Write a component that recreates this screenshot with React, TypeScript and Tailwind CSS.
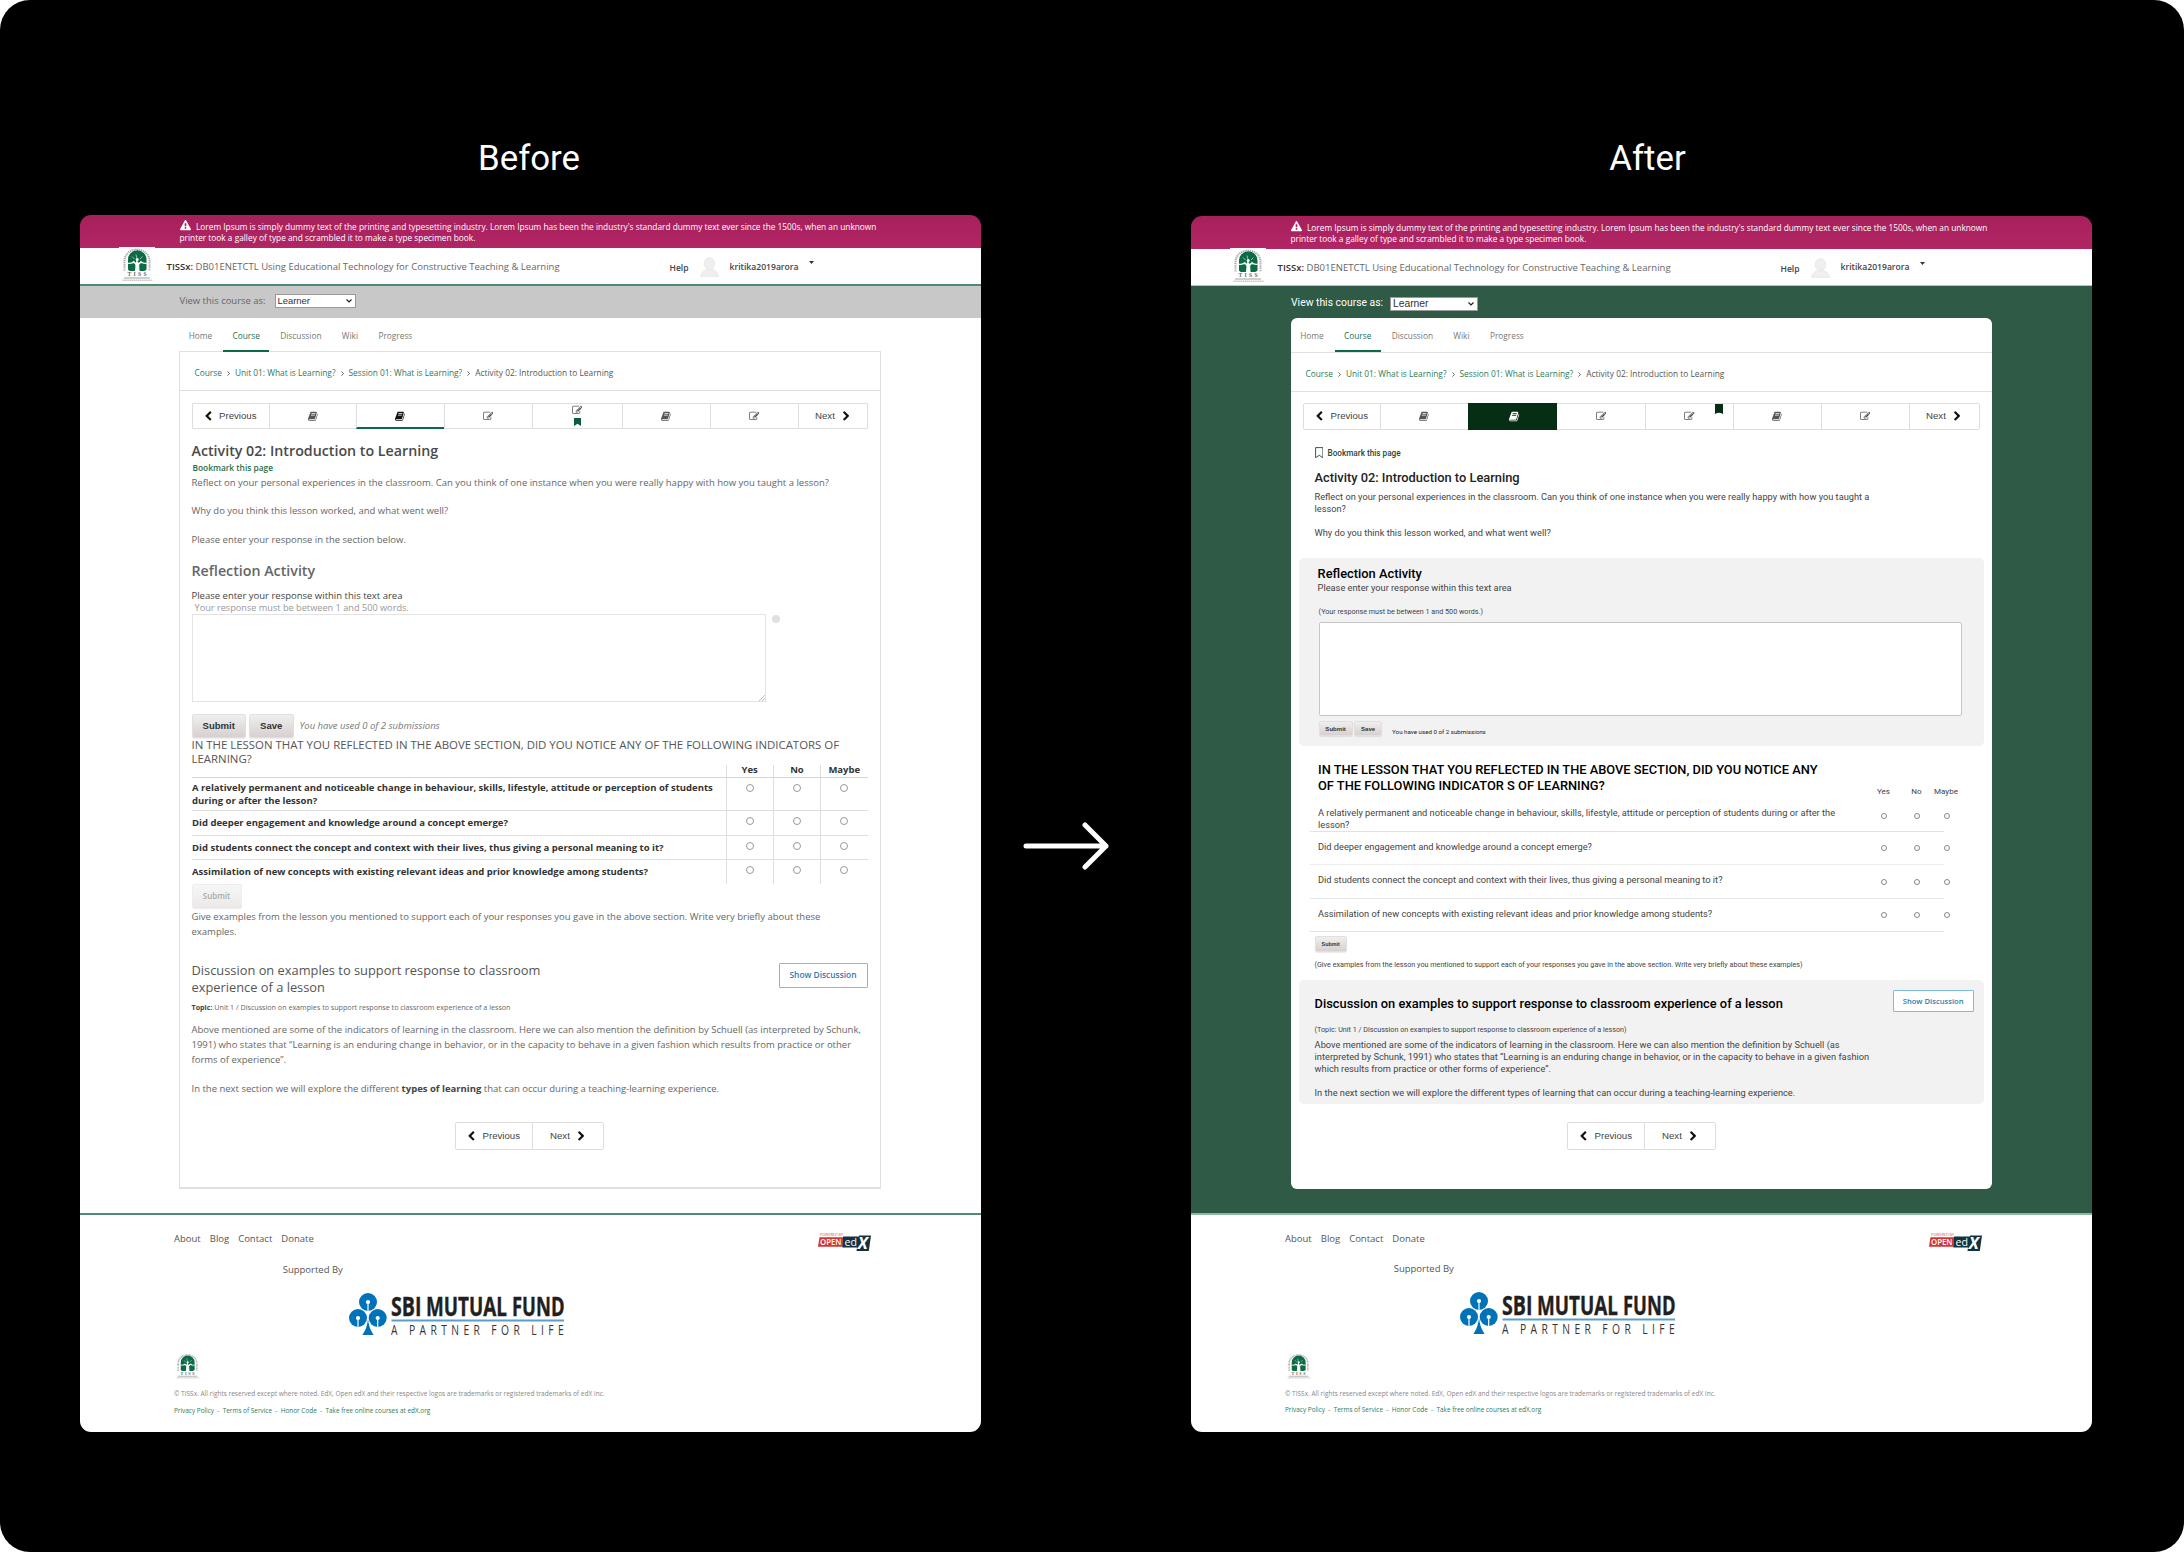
import type { ReactNode } from "react";

const BOOK =
  "M1639 478q40 57 18 129l-275 906q-19 64-76.500 107.500t-122.500 43.500h-923q-77 0-148.500-53.500t-99.500-131.500q-24-67-2-127 0-4 3-27t4-37q1-8-3-21.500t-3-19.500q2-11 8-21t16.500-23.500 16.500-23.500q23-38 45-91.500t30-91.500q3-10 .5-30t-.5-28q3-11 17-28t17-23q21-36 42-92t25-90q1-9-2.500-32t.5-28q4-13 22-30.500t22-22.500q19-26 42.500-84.500t27.500-96.500q1-8-3-25.500t-2-26.500q2-8 9-18t18-23 17-21q8-12 16.500-30.500t15-35 16-36 19.500-32 26.500-23.500 36-11.500 47.500 5.500l-1 3q38-9 51-9h761q74 0 114 56t18 130l-274 906q-36 119-71.500 153.500t-128.500 34.500h-869q-27 0-38 15-11 16-1 43 24 70 144 70h923q29 0 56-15.500t35-41.500l300-987q7-22 5-57 38 15 59 43zm-1064 2q-4 13 2 22.500t20 9.500h608q13 0 25.500-9.500t16.500-22.500l21-64q4-13-2-22.500t-20-9.500h-608q-13 0-25.500 9.500t-16.500 22.500zm-83 256q-4 13 2 22.500t20 9.500h608q13 0 25.500-9.500t16.500-22.500l21-64q4-13-2-22.500t-20-9.500h-608q-13 0-25.500 9.500t-16.500 22.500z";
const EDIT =
  "M888 1184l116-116-152-152-116 116v56h96v96h56zm440-720q-16-16-33 1l-350 350q-17 17-1 33t33-1l350-350q17-17 1-33zm80 594v190q0 119-84.500 203.500t-203.500 84.500h-832q-119 0-203.500-84.500t-84.500-203.500v-832q0-119 84.500-203.500t203.500-84.500h832q63 0 117 25 15 7 18 23 3 17-9 29l-49 49q-14 14-32 8-23-6-45-6h-832q-66 0-113 47t-47 113v832q0 66 47 113t113 47h832q66 0 113-47t47-113v-126q0-13 9-22l64-64q15-15 35-7t20 29zm-96-738l288 288-672 672h-288v-288zm444 132l-92 92-288-288 92-92q28-28 68-28t68 28l152 152q28 28 28 68t-28 68z";
const CHEVRON =
  "M1427 301l-531 531 531 531q19 19 19 45t-19 45l-166 166q-19 19-45 19t-45-19l-742-742q-19-19-19-45t19-45l742-742q19-19 45-19t45 19l166 166q19 19 19 45t-19 45z";
const WARNING =
  "M1024 1375v-190q0-14-9.500-23.500t-22.500-9.500h-192q-13 0-22.500 9.500t-9.500 23.500v190q0 14 9.500 23.500t22.500 9.500h192q13 0 22.500-9.500t9.500-23.500zm-2-374l18-459q0-12-10-19-13-11-24-11h-220q-11 0-24 11-10 7-10 21l17 457q0 10 10 16.500t24 6.500h185q14 0 23.500-6.500t10.500-16.500zm-14-934l768 1408q35 63-2 126-17 29-46.500 46t-63.500 17h-1536q-34 0-63.500-17t-46.500-46q-37-63-2-126l768-1408q17-31 47-49t65-18 65 18 47 49z";

function Icon({ d, className }: { d: string; className: string }) {
  return (
    <svg viewBox="0 0 1792 1792" className={className} fill="currentColor">
      <path d={d} />
    </svg>
  );
}

function TissLogo({ className }: { className: string }) {
  return (
    <svg viewBox="0 0 36 36" className={`overflow-visible ${className}`}>
      <path d="M5.500 23.500V14a12.500 11.500 0 0 1 25 0v9.500" fill="none" stroke="#a3a3a3" strokeWidth="2" strokeDasharray="1.100 0.800" />
      <path d="M9 22.500V12.500a9 9 0 0 1 18.500 0V22.500q-1.500 1.500-3 1.500h-4.500q-1.500-2-.8-6.500l2.800-2.800-3 1-.7-2.400h-.8l-.6 2.400-3-1.500 2.600 3.300q.8 4.500-.8 6.500h-4.200q-1.500 0-2.500-1.500z" fill="#0b6b45" />
      <path d="M9 16.200q3 .6 5.800-1.600l2.400 3-.4 6.400h3.200l-.4-6.400 2.400-3q2.600 2.200 5.800 1.600" stroke="#fff" strokeWidth="1.100" fill="#fff" />
      <path d="M13 9.500l2.500 2.500M23.500 9.500l-2.500 2.500M17 7.500l.8 3.500" stroke="#cfe3d9" strokeWidth=".7" fill="none" />
      <circle cx="18.200" cy="12.500" r="1.500" fill="#fff" />
      <text x="8.600" y="29" textLength="19" fontFamily="Liberation Serif" fontWeight="700" fontSize="5.600" fill="#666">TISS</text>
      <path d="M5 31h26" stroke="#777" strokeWidth=".7" />
      <path d="M3.500 33.200h30" stroke="#aaa" strokeWidth="1" strokeDasharray="1.400 0.500" />
    </svg>
  );
}

function SbiLogo() {
  return (
    <svg viewBox="0 0 216 42" className="mt-4 ml-[174.500px] h-[42px] w-[216px] overflow-visible">
      <g fill="#0072b9">
        <circle cx="19" cy="9" r="9" />
        <circle cx="9" cy="25" r="9" />
        <circle cx="28.700" cy="25" r="9" />
        <path d="M19 26q.8 9 5.600 16H13.400Q18.200 35 19 26z" />
      </g>
      <g fill="#fff">
        <circle cx="19" cy="9" r="2.100" />
        <path d="M18.400 9h1.200v9.500h-1.200z" />
        <circle cx="9" cy="25" r="2.100" />
        <path d="M8.400 25h1.200v9.500H8.400z" />
        <circle cx="28.700" cy="25" r="2.100" />
        <path d="M28.100 25h1.200v9.500h-1.200z" />
      </g>
      <g fontFamily="Open Sans" fontWeight="700" fontSize="26.500" fill="#231f20" stroke="#231f20" strokeWidth=".4">
        <text x="42" y="23.300" textLength="30.500" lengthAdjust="spacingAndGlyphs">SBI</text>
        <text x="77" y="23.300" textLength="81" lengthAdjust="spacingAndGlyphs">MUTUAL</text>
        <text x="163" y="23.300" textLength="52.500" lengthAdjust="spacingAndGlyphs">FUND</text>
      </g>
      <path d="M42.500 27.500h172.500" stroke="#5a9fcb" strokeWidth="1.800" />
      <g transform="translate(42 41.500) scale(.72 1)">
        <text x="0" y="0" textLength="240" fontFamily="Open Sans" fontSize="14.300" fill="#333">A PARTNER FOR LIFE</text>
      </g>
    </svg>
  );
}

function OpenEdxLogo() {
  return (
    <svg viewBox="0 0 54 20" className="h-5 w-[54px] overflow-visible">
      <text x="2" y="3.700" textLength="23" lengthAdjust="spacingAndGlyphs" fontFamily="Open Sans" fontSize="4" fill="#d9534f">POWERED BY</text>
      <path d="M1.500 5.200H25L24.500 14.800H0z" fill="#d23431" />
      <text x="2" y="13.300" textLength="21.500" lengthAdjust="spacingAndGlyphs" fontFamily="Open Sans" fontWeight="600" fontSize="9" fill="#fff">OPEN</text>
      <path d="M25 4.400H41V3.500H53L50.800 19H38.500L39 15.400H24.300z" fill="#12323f" />
      <text x="26.500" y="13.500" textLength="12.500" lengthAdjust="spacingAndGlyphs" fontFamily="Open Sans" fontSize="11.500" fill="#fff">ed</text>
      <text x="39.800" y="17" textLength="10" lengthAdjust="spacingAndGlyphs" fontFamily="Open Sans" fontWeight="700" fontStyle="italic" fontSize="16" fill="#fff">X</text>
    </svg>
  );
}

function Banner({ className }: { className: string }) {
  return (
    <div className={`shrink-0 bg-linear-to-b from-[#a6205b] to-[#b32565] pt-[5.200px] pl-[99.500px] text-[8.320px] leading-[10.800px] text-white ${className}`}>
      <p className="whitespace-nowrap">
        <Icon d={WARNING} className="mr-[5.500px] inline-block h-[11px] w-[11px] align-[-1px]" />
        Lorem Ipsum is simply dummy text of the printing and typesetting industry. Lorem Ipsum has been the industry's standard dummy text ever since the 1500s, when an unknown
      </p>
      <p>printer took a galley of type and scrambled it to make a type specimen book.</p>
    </div>
  );
}

function Header({ className }: { className: string }) {
  return (
    <div className={`flex shrink-0 items-start bg-white leading-[14px] whitespace-nowrap text-[#444] ${className}`}>
      <div className="-mt-px ml-[39px] bg-white">
        <TissLogo className="h-9 w-9" />
      </div>
      <p className="mt-[12px] ml-[11.500px] w-[503px] text-[9.520px] text-[#666]">
        <span className="font-semibold text-[#333]">TISSx:</span> DB01ENETCTL Using Educational Technology for Constructive Teaching &amp; Learning
      </p>
      <span className="mt-[13px] w-[30px] text-[8.550px] font-semibold">Help</span>
      <svg viewBox="0 0 19 20" className="mt-[9px] h-5 w-[19px]" fill="#efefef" stroke="#e2e2e2" strokeWidth=".6">
        <ellipse cx="9.500" cy="6.500" rx="5.300" ry="6" />
        <path d="M.5 19.700q1-6 6-7.200 3 1.600 6 0 5 1.200 6 7.200z" />
      </svg>
      <span className="mt-[11.500px] ml-[11px] w-[79.500px] text-[8.600px] font-semibold">kritika2019arora</span>
      <svg viewBox="0 0 5 3" className="mt-[13px] h-[3px] w-[5px]">
        <path d="M0 0h5L2.500 3z" fill="#333" />
      </svg>
    </div>
  );
}

function RoleSelect({ className }: { className: string }) {
  return (
    <div className={`flex items-center justify-between border border-[#999] bg-white pr-[3px] pl-[2px] font-["Liberation_Sans",sans-serif] text-[#333] ${className}`}>
      <span>Learner</span>
      <svg viewBox="0 0 6 4" className="h-1 w-1.5">
        <path d="M.5.500L3 3 5.500.500" fill="none" stroke="#222" strokeWidth="1.200" />
      </svg>
    </div>
  );
}

function Tabs({ className }: { className: string }) {
  const tab = "flex h-full items-end border-b-2 px-[9.200px]";
  return (
    <div className={`flex gap-[1.900px] text-[8.330px] leading-[14px] text-[#777] ${className}`}>
      {["Home", "Course", "Discussion", "Wiki", "Progress"].map((t) => (
        <div key={t} className={t === "Course" ? `${tab} border-[#0b6b45] text-[#20714d]` : `${tab} border-transparent`}>
          <span className="pb-[7px]">{t}</span>
        </div>
      ))}
    </div>
  );
}

function Crumb() {
  return (
    <svg viewBox="0 0 3 5" className="mt-px h-[5px] w-[3px]">
      <path d="M.5.400L2.500 2.500.5 4.600" fill="none" stroke="#555" strokeWidth=".9" />
    </svg>
  );
}

function Breadcrumb() {
  return (
    <div className="h-[39px] border-b border-[#e0e0e0] pt-[14px] pl-[14.500px]">
      <div className="flex items-center gap-[5px] text-[8.330px] leading-[14px] text-[#2d7a58]">
        <span>Course</span>
        <Crumb />
        <span>Unit 01: What is Learning?</span>
        <Crumb />
        <span>Session 01: What is Learning?</span>
        <Crumb />
        <span className="text-[#555]">Activity 02: Introduction to Learning</span>
      </div>
    </div>
  );
}

const lib = 'font-["Liberation_Sans",sans-serif]';

function PrevLabel() {
  return (
    <span className={`flex items-center gap-[6px] text-[9.660px] leading-[14px] text-[#444] ${lib}`}>
      <Icon d={CHEVRON} className="h-[10.500px] w-[10.500px] text-[#111]" />
      Previous
    </span>
  );
}

function NextLabel() {
  return (
    <span className={`flex items-center gap-[6px] text-[9.660px] leading-[14px] text-[#444] ${lib}`}>
      Next
      <Icon d={CHEVRON} className="h-[10.500px] w-[10.500px] -scale-x-100 text-[#111]" />
    </span>
  );
}

function Cell({ className, children }: { className: string; children: ReactNode }) {
  return <div className={`flex items-center justify-center border-l border-[#dedede] ${className}`}>{children}</div>;
}

const ic = "h-[10.500px] w-[10.500px] text-[#555]";

function NavBefore() {
  return (
    <div className="mt-3 flex h-[26px] w-[676.500px] rounded-[1px] border border-[#dedede]">
      <div className="flex w-[76px] items-center pl-[10px]">
        <PrevLabel />
      </div>
      <Cell className="w-[87.500px]"><Icon d={BOOK} className={ic} /></Cell>
      <Cell className="-mb-px w-[87.500px] border-b-2 border-b-[#0b6b45]">
        <Icon d={BOOK} className="mt-px h-[10.500px] w-[10.500px] text-[#111]" />
      </Cell>
      <Cell className="w-[88px]"><Icon d={EDIT} className={ic} /></Cell>
      <Cell className="w-[90px] flex-col">
        <Icon d={EDIT} className="h-[10.500px] w-[10.500px] text-[#555]" />
        <svg viewBox="0 0 7 8" className="mt-[2.500px] mb-[1px] h-2 w-[7px]">
          <path d="M0 0h7v8L3.500 5.800 0 8z" fill="#0b5d3b" />
        </svg>
      </Cell>
      <Cell className="w-[88px]"><Icon d={BOOK} className={ic} /></Cell>
      <Cell className="w-[88px]"><Icon d={EDIT} className={ic} /></Cell>
      <div className="flex flex-1 items-center border-l border-[#dedede] pl-[16.500px]">
        <NextLabel />
      </div>
    </div>
  );
}

function NavAfter() {
  return (
    <div className="mt-[11px] ml-3 flex h-[27px] w-[677px] rounded-[2px] border border-[#dedede]">
      <div className="flex w-[76px] items-center pl-[10px]">
        <PrevLabel />
      </div>
      <Cell className="w-[88px]"><Icon d={BOOK} className={ic} /></Cell>
      <div className="-my-px flex w-[89px] items-center justify-center bg-[#052e14] pt-px pl-[3px]">
        <Icon d={BOOK} className="h-[11px] w-[11px] text-white" />
      </div>
      <Cell className="w-[88px] border-l-0"><Icon d={EDIT} className={ic} /></Cell>
      <Cell className="relative w-[88px]">
        <Icon d={EDIT} className={ic} />
        <svg viewBox="0 0 8 10" className="absolute top-0 right-[10px] h-2.5 w-2">
          <path d="M0 0h8v10Q4 7.500 0 10z" fill="#052e14" />
        </svg>
      </Cell>
      <Cell className="w-[87.500px]"><Icon d={BOOK} className={ic} /></Cell>
      <Cell className="w-[88px]"><Icon d={EDIT} className={ic} /></Cell>
      <div className="flex flex-1 items-center border-l border-[#dedede] pl-[16.500px]">
        <NextLabel />
      </div>
    </div>
  );
}

function Pager({ className }: { className: string }) {
  return (
    <div className={`flex w-[149px] rounded-[2px] border border-[#dedede] bg-white ${className}`}>
      <div className="flex w-[77px] items-center border-r border-[#dedede] pl-[10px]">
        <PrevLabel />
      </div>
      <div className="flex flex-1 items-center pl-[17px]">
        <NextLabel />
      </div>
    </div>
  );
}

const btn = `flex items-center justify-center rounded-[2px] border border-[#e3dfdf] bg-linear-to-b from-[#efefef] to-[#d8d0d0] font-bold text-[#333] shadow-[0_1px_1px_rgba(0,0,0,0.080)] ${lib}`;

function Radio({ className }: { className: string }) {
  return <span className={`box-border block rounded-full border bg-white ${className}`} />;
}

const QUESTIONS = [
  "Did deeper engagement and knowledge around a concept emerge?",
  "Did students connect the concept and context with their lives, thus giving a personal meaning to it?",
  "Assimilation of new concepts with existing relevant ideas and prior knowledge among students?",
];

function RowBefore({ className, text, children }: { className: string; text: string; children: ReactNode }) {
  return (
    <div className={`flex ${className}`}>
      <div className={`w-[534px] pl-[0.500px] ${text}`}>{children}</div>
      {[0, 1, 2].map((i) => (
        <div key={i} className="flex w-[47.300px] justify-center border-l border-[#dedede] pt-[6px]">
          <Radio className="h-2 w-2 border-[#999]" />
        </div>
      ))}
    </div>
  );
}

function Before() {
  return (
    <main className="h-[927px] shrink-0 bg-white">
      <div className="flex h-8 items-start bg-[#c8c8c8] pl-[99.500px]">
        <span className="mt-2 w-[95px] text-[9.460px] leading-[14px] text-[#666]">View this course as:</span>
        <RoleSelect className="mt-2 h-[14px] w-[81px] text-[9.430px] leading-[12px]" />
      </div>
      <Tabs className="ml-[99.500px] h-[34px]" />
      <section className="-mt-px ml-[99px] h-[838px] w-[702px] border border-b-2 border-[#e0e0e0] text-[9.510px] leading-[14px] text-[#666]">
        <Breadcrumb />
        <div className="pl-[11.500px]">
          <NavBefore />
          <h2 className="mt-[11.500px] text-[14.240px] leading-5 font-semibold text-[#4a4a4a]">Activity 02: Introduction to Learning</h2>
          <p className="mt-px pl-px text-[8.350px] leading-3 font-semibold text-[#1f6f4a]">Bookmark this page</p>
          <p className="mt-[2px]">Reflect on your personal experiences in the classroom. Can you think of one instance when you were really happy with how you taught a lesson?</p>
          <p className="mt-[14.500px]">Why do you think this lesson worked, and what went well?</p>
          <p className="mt-[15px]">Please enter your response in the section below.</p>
          <h3 className="mt-[13.500px] text-[14.240px] leading-5 font-semibold text-[#666]">Reflection Activity</h3>
          <p className="mt-[8.500px] text-[#444]">Please enter your response within this text area</p>
          <p className="-mt-px pl-[3px] text-[9.180px] leading-3 text-[#999]">Your response must be between 1 and 500 words.</p>
          <div className="flex items-start gap-[6px]">
            <div className="flex h-[88px] w-[574.500px] items-end justify-end border-[1.500px] border-[#e3e3e3]">
              <svg viewBox="0 0 6 6" className="h-1.5 w-1.5" stroke="#999" strokeWidth=".6">
                <path d="M0 6L6 0M3 6L6 3" />
              </svg>
            </div>
            <span className="mt-px h-2 w-2 rounded-full bg-[#e0e0e0]" />
          </div>
          <div className="mt-[11.500px] flex h-[24.500px] items-stretch text-[9.550px]">
            <div className={`${btn} w-[54.500px]`}>Submit</div>
            <div className={`${btn} ml-[2.500px] w-[45.500px]`}>Save</div>
            <span className="ml-[5.500px] self-center text-[9.500px] text-[#777] italic">You have used 0 of 2 submissions</span>
          </div>
          <p className="w-[660px] text-[11.410px] leading-[13.500px] text-[#555]">
            IN THE LESSON THAT YOU REFLECTED IN THE ABOVE SECTION, DID YOU NOTICE ANY OF THE FOLLOWING INDICATORS OF LEARNING?
          </p>
          <div className="w-[676px] font-bold text-[#333]">
            <div className="flex h-[13px] border-b-[1.500px] border-[#d6d6d6] pl-[534px] leading-[10px]">
              {["Yes", "No", "Maybe"].map((t) => (
                <div key={t} className="w-[47.300px] border-l border-[#dedede] text-center">{t}</div>
              ))}
            </div>
            <RowBefore className="h-[32.500px] border-b border-[#dedede] leading-[13.300px]" text="pt-[2.500px] pr-[10px]">
              A relatively permanent and noticeable change in behaviour, skills, lifestyle, attitude or perception of students during or after the lesson?
            </RowBefore>
            <RowBefore className="h-[25px] border-b border-[#dedede]" text="pt-[5px]">{QUESTIONS[0]}</RowBefore>
            <RowBefore className="h-[24.500px] border-b border-[#dedede]" text="pt-[5px]">{QUESTIONS[1]}</RowBefore>
            <RowBefore className="h-[24px]" text="pt-[5px]">{QUESTIONS[2]}</RowBefore>
          </div>
          <div className="flex h-[24.500px] w-[50px] items-center justify-center rounded-[2px] border border-[#efecec] bg-linear-to-b from-[#f7f7f7] to-[#ece8e8] text-[7.960px] font-semibold text-[#aaa]">Submit</div>
          <p className="w-[660px] leading-[15px]">
            Give examples from the lesson you mentioned to support each of your responses you gave in the above section. Write very briefly about these examples.
          </p>
          <div className="mt-[23.500px] flex w-[676px] items-start justify-between">
            <h3 className="w-[360px] text-[12.850px] leading-[17.200px] text-[#555]">Discussion on examples to support response to classroom experience of a lesson</h3>
            <div className="mt-[0.500px] flex h-[25px] w-[89px] items-center justify-center rounded-[1px] border border-[#7ebbdc] text-[8.390px] font-semibold text-[#2a7db5]">Show Discussion</div>
          </div>
          <p className="mt-[6px] text-[7.150px] leading-[10px]">
            <span className="font-bold text-[#444]">Topic:</span> Unit 1 / Discussion on examples to support response to classroom experience of a lesson
          </p>
          <p className="mt-[9.500px] w-[676px] leading-[15.200px]">
            Above mentioned are some of the indicators of learning in the classroom. Here we can also mention the definition by Schuell (as interpreted by Schunk, 1991) who states that “Learning is an enduring change in behavior, or in the capacity to behave in a given fashion which results from practice or other forms of experience”.
          </p>
          <p className="mt-[14px]">
            In the next section we will explore the different <b className="text-[#444]">types of learning</b> that can occur during a teaching-learning experience.
          </p>
          <Pager className="mt-[26.500px] ml-[263.500px] h-7" />
        </div>
      </section>
    </main>
  );
}

function RowAfter({ className, text, children }: { className: string; text: string; children: ReactNode }) {
  return (
    <div className={`flex w-[633.500px] ${className}`}>
      <div className="w-[557.500px] shrink-0 pl-[8px]">
        <div className={`w-[535px] ${text}`}>{children}</div>
      </div>
      <Radio className="mx-[13.500px] h-1.5 w-1.5 shrink-0 border-[#888]" />
      <Radio className="mx-[13.500px] h-1.5 w-1.5 shrink-0 border-[#888]" />
      <Radio className="mx-[10px] h-1.5 w-1.5 shrink-0 border-[#888]" />
    </div>
  );
}

function After() {
  const small = "text-[7.200px] leading-[10px]";
  const title = "text-[12.850px] leading-4 font-medium";
  return (
    <main className='h-[928px] shrink-0 border-t border-[#a9cdbd] bg-[#2e5a46] font-["Open_Sans",sans-serif]'>
      <div className="flex h-[32.500px] items-start pl-[100px]">
        <span className='mt-[10px] w-[99px] font-["Roboto",sans-serif] text-[10.380px] leading-[14px] text-white'>View this course as:</span>
        <RoleSelect className="mt-[11px] h-[14px] w-[88px] text-[10.300px] leading-[12px]" />
      </div>
      <section className="ml-[100px] h-[870.500px] w-[700.500px] rounded-[6px] bg-white">
        <Tabs className="h-[34.500px] border-b border-[#e0e0e0]" />
        <Breadcrumb />
        <NavAfter />
        <div className='font-["Roboto",sans-serif] text-[9.260px] leading-[12.100px] text-[#444]'>
          <div className="mt-[17.500px] ml-[23.500px] flex items-center gap-[4.500px] text-[8.200px] leading-3 font-medium text-[#1f4a35]">
            <svg viewBox="0 0 8.500 11.500" className="h-[11.500px] w-[8.500px]">
              <path d="M.6.600h7.300v10.100L4.250 8.300.6 10.700z" fill="none" stroke="#1f4a35" strokeWidth=".9" />
            </svg>
            Bookmark this page
          </div>
          <h2 className={`mt-[10.500px] ml-[23.500px] text-[#222] ${title}`}>Activity 02: Introduction to Learning</h2>
          <p className="mt-[5.500px] ml-[23.500px] w-[570px]">
            Reflect on your personal experiences in the classroom. Can you think of one instance when you were really happy with how you taught a lesson?
          </p>
          <p className="mt-[12.100px] ml-[23.500px]">Why do you think this lesson worked, and what went well?</p>

          <section className="mt-[19px] ml-[7.600px] h-[188px] w-[685px] rounded-[5px] bg-[#f2f2f2] pt-2 pl-[19px]">
            <h3 className={`text-black ${title}`}>Reflection Activity</h3>
            <p className="leading-3">Please enter your response within this text area</p>
            <p className={`mt-[13px] ml-px ${small}`}>(Your response must be between 1 and 500 words.)</p>
            <div className="mt-[5px] ml-px h-[93.500px] w-[643px] rounded-[2px] border border-[#c6c6c6] bg-white" />
            <div className="mt-[5px] ml-px flex h-[15.500px] items-stretch text-[6.050px] leading-[8px]">
              <div className={`${btn} w-[34px]`}>Submit</div>
              <div className={`${btn} ml-[1.500px] w-7`}>Save</div>
              <span className="mt-[6.500px] ml-[10px] text-[6.190px] leading-[10px] text-[#222]">You have used 0 of 2 submissions</span>
            </div>
          </section>

          <div className="mt-[16px] ml-[27px] flex h-[35px] items-end">
            <h3 className={`w-[549px] self-start text-black ${title}`}>
              IN THE LESSON THAT YOU REFLECTED IN THE ABOVE SECTION, DID YOU NOTICE ANY
              <br />
              OF THE FOLLOWING INDICATOR S OF LEARNING?
            </h3>
            <div className="flex text-center text-[8.080px] leading-[10px]">
              <span className="w-[33px]">Yes</span>
              <span className="w-[33px]">No</span>
              <span className="w-[26px]">Maybe</span>
            </div>
          </div>
          <div className="ml-[19px]">
            <RowAfter className="h-[34.500px] border-b border-[#e2e2e2] [&>span]:mt-[15.500px]" text="pt-[9.500px]">
              A relatively permanent and noticeable change in behaviour, skills, lifestyle, attitude or perception of students during or after the lesson?
            </RowAfter>
            <RowAfter className="h-[33.500px] border-b border-[#ececec] [&>span]:mt-[13.500px]" text="pt-[9px]">{QUESTIONS[0]}</RowAfter>
            <RowAfter className="h-[33.500px] border-b border-[#e5e5e5] [&>span]:mt-[13.500px]" text="pt-[9px]">{QUESTIONS[1]}</RowAfter>
            <RowAfter className="h-[33px] border-b border-[#e2e2e2] [&>span]:mt-[13px]" text="pt-[9px]">{QUESTIONS[2]}</RowAfter>
          </div>
          <div className={`${btn} mt-[4.500px] ml-[23.500px] h-[15.500px] w-[32.500px] text-[5.400px]`}>Submit</div>
          <p className={`mt-[8.500px] ml-[23.500px] ${small}`}>
            (Give examples from the lesson you mentioned to support each of your responses you gave in the above section. Write very briefly about these examples)
          </p>

          <section className="mt-[9.500px] ml-[7.600px] h-[124px] w-[685px] rounded-[5px] bg-[#f2f2f2] pl-[16px]">
            <div className="flex h-[44.800px] items-start justify-between pr-[10px]">
              <h3 className={`mt-[16.500px] text-black ${title}`}>Discussion on examples to support response to classroom experience of a lesson</h3>
              <div className='mt-[10px] flex h-[22px] w-[81px] items-center justify-center rounded-[1px] border border-[#7ebbdc] bg-white font-["Open_Sans",sans-serif] text-[7.600px] font-semibold text-[#2a7db5]'>Show Discussion</div>
            </div>
            <p className={small}>(Topic: Unit 1 / Discussion on examples to support response to classroom experience of a lesson)</p>
            <p className="mt-[4.700px] w-[565px] leading-3">
              Above mentioned are some of the indicators of learning in the classroom. Here we can also mention the definition by Schuell (as interpreted by Schunk, 1991) who states that “Learning is an enduring change in behavior, or in the capacity to behave in a given fashion which results from practice or other forms of experience”.
            </p>
            <p className="mt-3 leading-3">In the next section we will explore the different types of learning that can occur during a teaching-learning experience.</p>
          </section>
          <Pager className="mt-[18.500px] ml-[276px] h-7" />
        </div>
      </section>
    </main>
  );
}

function Footer({ className }: { className: string }) {
  return (
    <footer className={`flex-1 border-t-2 bg-white pt-[17px] pl-[94px] text-[9.500px] leading-[14px] text-[#555] ${className}`}>
      <div className="flex h-5 w-[697.500px] items-start gap-[9px]">
        <span>About</span>
        <span>Blog</span>
        <span>Contact</span>
        <span>Donate</span>
        <div className="ml-auto">
          <OpenEdxLogo />
        </div>
      </div>
      <p className="mt-[10.500px] ml-[108.700px]">Supported By</p>
      <SbiLogo />
      <TissLogo className="mt-[18.500px] h-[27px] w-[27px]" />
      <p className="mt-[9px] text-[6.530px] leading-[10px] text-[#888]">
        © TISSx. All rights reserved except where noted. EdX, Open edX and their respective logos are trademarks or registered trademarks of edX Inc.
      </p>
      <p className="mt-[6.500px] text-[6.420px] leading-[10px] whitespace-pre text-[#2d7a58]">
        {"Privacy Policy  -  Terms of Service  -  Honor Code  -  Take free online courses at edX.org"}
      </p>
    </footer>
  );
}

export default function App() {
  return (
    <div className="h-[1552px] w-[2184px] bg-white">
      <div className='flex h-full rounded-[30px] bg-black pl-[80px] font-["Open_Sans",sans-serif]'>
        <div className="w-[901px]">
          <h1 className='mt-[138px] h-10 pr-[3px] text-center font-["Roboto",sans-serif] text-[34.800px] leading-10 text-white'>Before</h1>
          <article className="mt-[37px] flex h-[1217px] flex-col overflow-hidden rounded-[11px]">
            <Banner className="h-[33px]" />
            <Header className="h-[38px] border-b-2 border-[#4f8a74]" />
            <Before />
            <Footer className="border-[#4f8a74]" />
          </article>
        </div>
        <div className="flex w-[210px] pt-[822px] pl-[41.500px]">
          <svg viewBox="0 0 86 48" className="h-12 w-[86px]" fill="none" stroke="#fff" strokeWidth="5" strokeLinecap="round" strokeLinejoin="round">
            <path d="M3 24h80M62 3l21 21-21 21" />
          </svg>
        </div>
        <div className="w-[901px]">
          <h1 className='mt-[138px] h-10 pl-3 text-center font-["Roboto",sans-serif] text-[34.800px] leading-10 text-white'>After</h1>
          <article className="mt-[38px] flex h-[1216px] flex-col overflow-hidden rounded-[11px]">
            <Banner className="h-[32.500px]" />
            <Header className="h-[36px]" />
            <After />
            <Footer className="border-[#8fb5a3]" />
          </article>
        </div>
      </div>
    </div>
  );
}
